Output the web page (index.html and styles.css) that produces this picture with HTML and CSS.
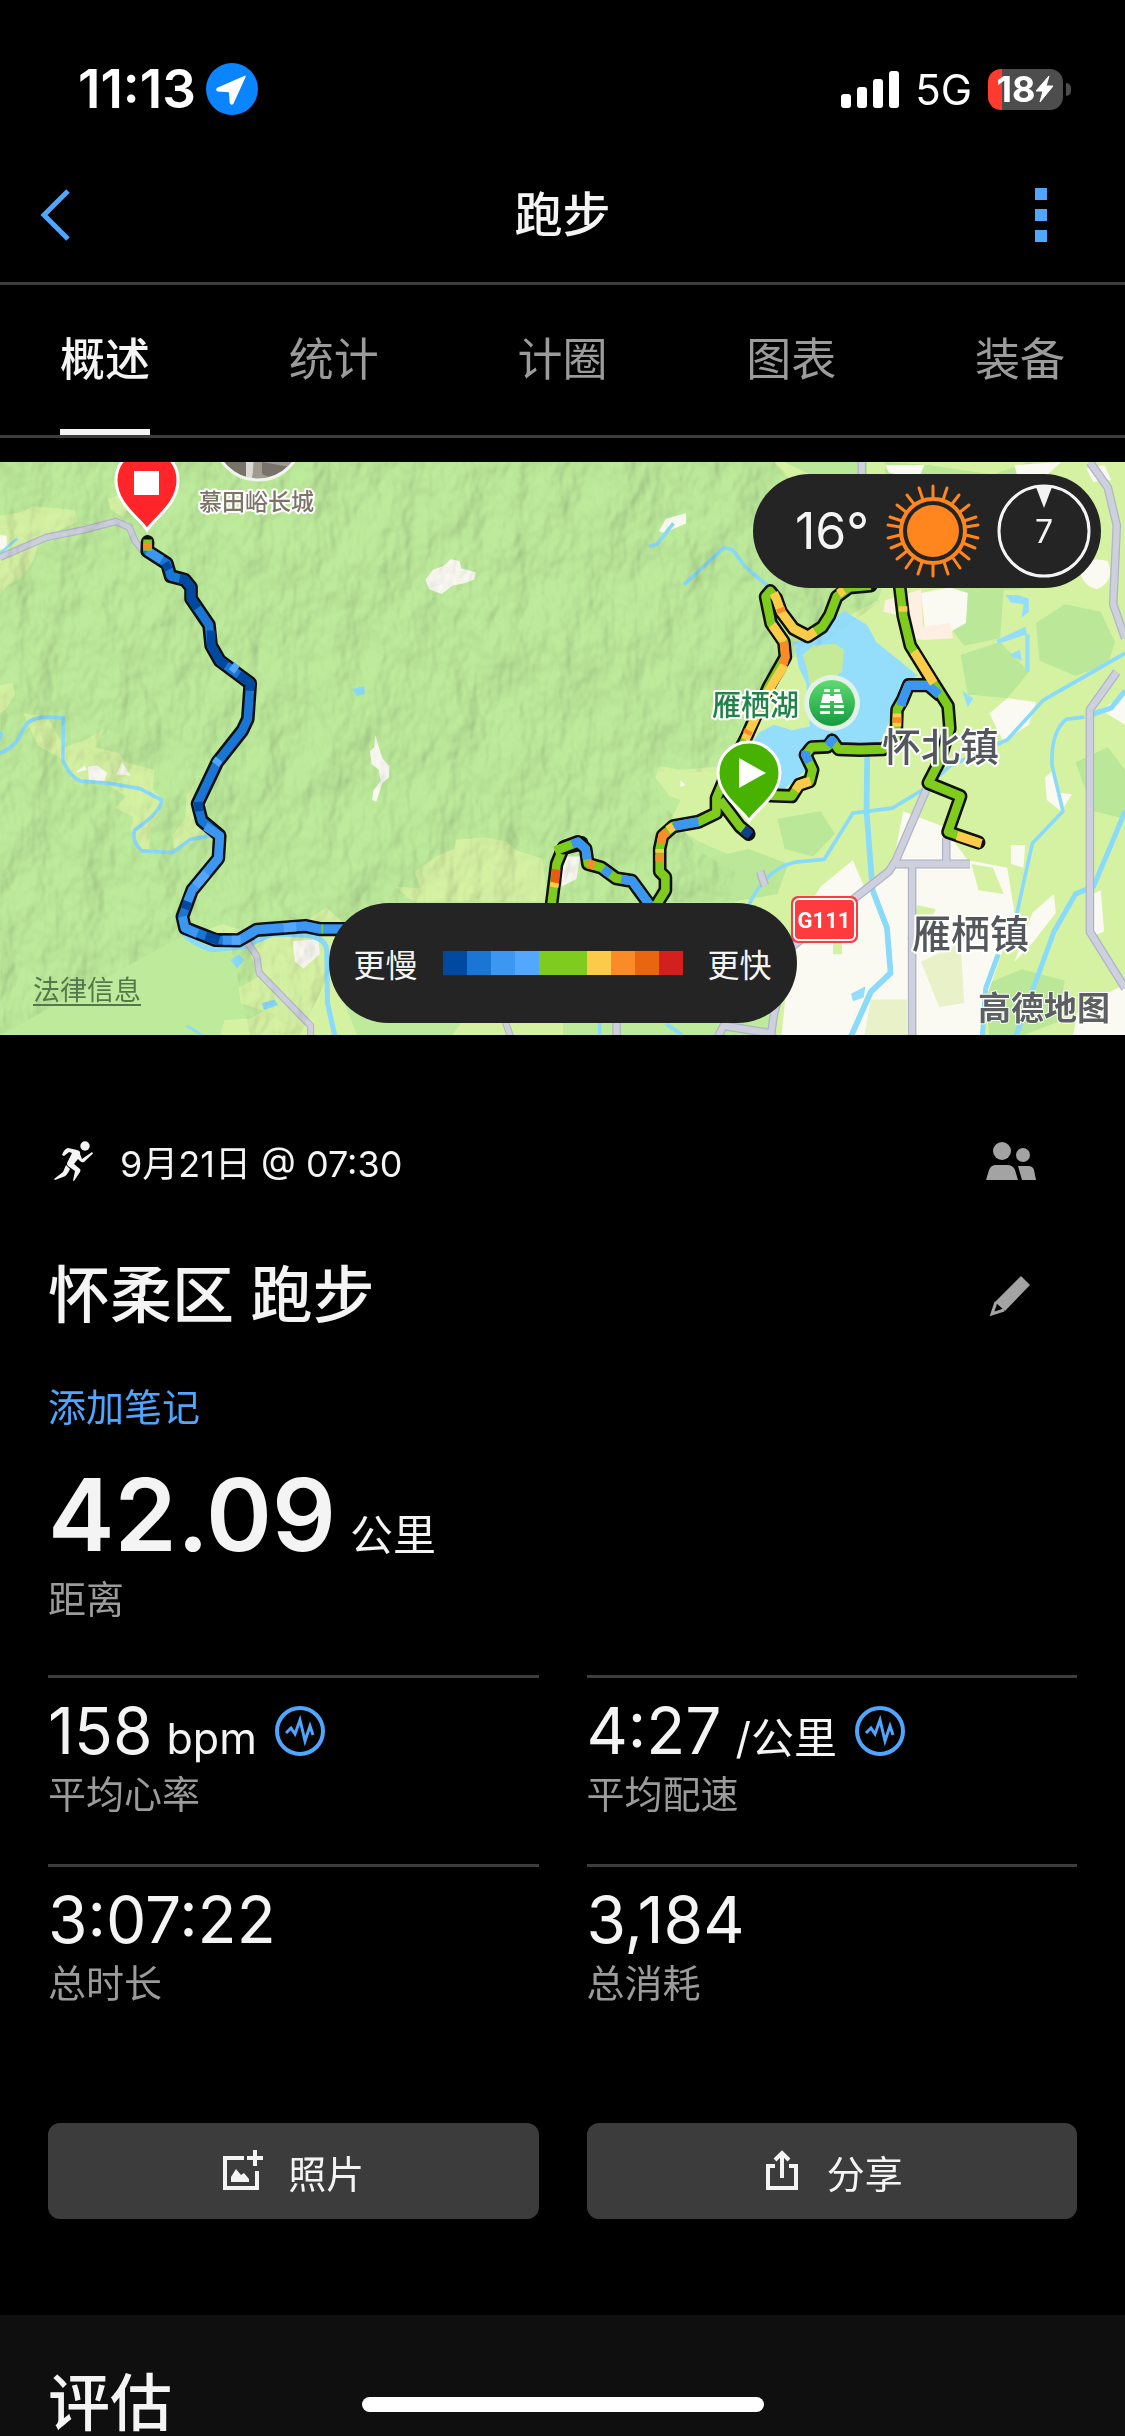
FILE: index.html
```
<!DOCTYPE html>
<html lang="zh-CN">
<head>
    <meta charset="UTF-8">
    <meta name="viewport" content="width=device-width, initial-scale=1.0">
    <title>跑步</title>
    <link rel="stylesheet" href="styles.css">
</head>
<body>
    <div class="status-bar">
        <div class="status-left">
            <span class="time">11:13</span>
            <svg class="location" width="52" height="52" viewBox="0 0 52 52">
                <circle cx="26" cy="26" r="26" fill="#0a84ff"/>
                <path d="M39 13.500L11.500 25.500Q10 27 12 27.800L23.500 28.500 24.500 40Q25.500 42 27 40Z" fill="#fff" stroke="#fff" stroke-width="1.500" stroke-linejoin="round"/>
            </svg>
        </div>
        <div class="status-right">
            <svg width="58" height="37" viewBox="0 0 58 37" fill="#fff">
                <rect x="0" y="23" width="10" height="14" rx="3"/>
                <rect x="16" y="16" width="10" height="21" rx="3"/>
                <rect x="32" y="8" width="10" height="29" rx="3"/>
                <rect x="48" y="0" width="10" height="37" rx="3"/>
            </svg>
            <span class="network">5G</span>
            <div class="battery">
                <span class="battery-level">18</span>
                <svg width="19" height="28" viewBox="0 0 19 28"><path d="M14 1L1 16H8L5 27 18 11H11Z" fill="#fff" stroke="#fff" stroke-linejoin="round"/></svg>
            </div>
        </div>
    </div>

    <header class="navbar">
        <button class="icon-button back" aria-label="返回">
            <svg width="32" height="54" viewBox="0 0 32 54"><path d="M28 3L4 27 28 51" fill="none" stroke="#4fa6ff" stroke-width="5"/></svg>
        </button>
        <h1>跑步</h1>
        <button class="icon-button more" aria-label="更多">
            <svg width="12" height="54" viewBox="0 0 12 54" fill="#4fa6ff"><path d="M0 0h12v12H0zM0 21h12v12H0zM0 42h12v12H0z"/></svg>
        </button>
    </header>

    <nav class="tabs">
        <a href="#overview" class="tab active">概述</a>
        <a href="#stats" class="tab">统计</a>
        <a href="#laps" class="tab">计圈</a>
        <a href="#charts" class="tab">图表</a>
        <a href="#gear" class="tab">装备</a>
    </nav>

    <section class="map">
        <svg class="map-canvas" viewBox="0 0 1125 573" preserveAspectRatio="xMidYMid slice">
            <defs>
                <filter id="relief" x="0" y="0" width="100%" height="100%">
                    <feTurbulence type="fractalNoise" baseFrequency="0.022 0.014" numOctaves="4" seed="7"/>
                    <feDiffuseLighting surfaceScale="14" diffuseConstant="1" lighting-color="#ffffff">
                        <feDistantLight azimuth="225" elevation="60"/>
                    </feDiffuseLighting>
                    <feComposite in2="SourceGraphic" operator="in"/>
                </filter>
                <linearGradient id="poi" x1="0" y1="0" x2="0" y2="1">
                    <stop offset="0" stop-color="#5fdb70"/>
                    <stop offset="1" stop-color="#139b40"/>
                </linearGradient>
                <clipPath id="photo"><circle cx="258" cy="-26" r="43"/></clipPath>
            </defs>

            <rect width="1125" height="573" fill="#bdea9b"/>

            <!-- 西侧底图 -->
            <g transform="matrix(0.3591 0 0 0.3763 0 -12)">
                <g fill="#d5f2a3">
                    <path d="M0 175L60 165 90 150 160 155 210 160 215 190 160 215 110 240 95 290 60 340 20 360 0 385Z"/>
                    <path d="M300 130L330 120 360 150 345 180 310 160ZM0 625L35 620 42 650 15 690 0 700Z"/>
                    <path d="M65 700L105 705 135 715 180 790 240 770 290 740 265 790 330 805 350 830 430 850 425 900 455 930 420 1010 415 1060 390 1060 365 1010 370 975 320 950 350 920 300 890 200 875 170 820 105 785Z"/>
                    <path d="M540 890L520 920 515 980 480 1025 485 1060 540 1040 570 1020 560 985 535 960Z"/>
                    <path d="M1100 1160L1170 1165 1155 1120 1225 1075 1265 1060 1270 1035 1350 1030 1410 1040 1440 1065 1510 1085 1525 1200 1150 1200Z"/>
                    <path d="M530 1290L620 1260 690 1280 790 1290 910 1215 960 1260 930 1400 1000 1568 610 1568 625 1515 700 1510 735 1490 670 1470 665 1430 720 1400 690 1320 590 1320Z"/>
                    <path d="M1300 1500L1568 1500V1568H1250Z"/>
                </g>
                <g fill="#fafaf2">
                    <path d="M1185 345L1205 318 1235 308 1255 290 1280 295 1285 315 1325 325 1320 345 1290 355 1260 360 1230 383 1195 370Z"/>
                    <path d="M1045 757L1055 790 1065 820 1085 840 1083 870 1065 885 1048 935 1036 930 1040 905 1060 880 1055 850 1035 835 1030 800 1042 790Z"/>
                    <path d="M215 853L235 838 242 850 215 858ZM245 842L270 838 298 858 290 880 248 880ZM325 862L340 828 362 865ZM0 225L18 228 20 260 0 265ZM815 1305L887 1300 890 1340 845 1378 822 1360Z"/>
                </g>
                <g fill="none" stroke="#8adafa" stroke-width="10" stroke-linejoin="round">
                    <path d="M0 805Q45 790 60 750T130 710L177 712 175 825Q195 870 225 880L300 885 390 900 450 930Q450 960 375 1010 365 1040 395 1065L480 1070 530 1035 590 1025"/>
                    <path d="M498 1250Q500 1300 590 1328L680 1320 760 1285 860 1290Q915 1300 910 1340L912 1470 935 1568" stroke-width="14"/>
                    <path d="M0 275L30 250 48 235M520 1530L570 1560" stroke-width="7"/>
                </g>
                <path d="M980 635L1015 628 1015 648 995 655ZM642 1355L665 1340 680 1355 660 1378ZM728 1470L765 1460 775 1475 735 1488ZM0 745L10 755 0 775Z" fill="#8adafa"/>
                <g fill="none" stroke-linejoin="round">
                    <path d="M0 285L130 232 235 212 322 190 360 205 375 240 400 270M690 1310L715 1345 722 1390 865 1530V1568M1400 1500L1425 1568" stroke="#b2b6c9" stroke-width="20"/>
                    <path d="M0 285L130 232 235 212 322 190 360 205 375 240 400 270M690 1310L715 1345 722 1390 865 1530V1568M1400 1500L1425 1568" stroke="#ced0dc" stroke-width="14"/>
                </g>
            </g>

            <!-- 东侧底图 -->
            <g transform="matrix(0.3591 0 0 0.3763 562 -12)">
                <path d="M590 32L650 100 860 300 890 370 880 400 800 440 720 500 660 520 620 600 560 660 500 740 460 840 330 850 270 840 260 870 300 920 330 930 300 990 380 1040 500 1090 480 1200 560 1300 600 1568H1568V32Z" fill="#d5f2a3"/>
                <g fill="#bae798">
                    <path d="M620 32L850 32 850 70 700 70ZM900 32L1020 40 1200 65 1300 32 1440 100 1490 200 1430 310 1280 370 1150 375 1130 440 1060 365 900 340Z"/>
                    <path d="M1320 460L1400 410 1500 430 1540 510 1520 570 1430 600 1330 560ZM1110 545L1220 510 1300 590 1240 660 1130 650ZM380 1090L520 1060 630 1100 600 1180 480 1200 380 1170Z"/>
                    <path d="M1180 1420L1280 1380 1400 1410 1380 1520 1250 1568 1190 1568ZM1100 380L1230 370 1220 500 1120 520 1080 470ZM600 980L720 960 760 1020 700 1080 620 1060Z"/>
                    <path d="M1430 830L1520 790 1568 850V980L1480 960Z"/>
                </g>
                <g fill="#fbfaf2">
                    <path d="M950 960L1060 1000 1130 1090 1240 1110 1260 1230 1220 1350 1180 1460 1170 1568H610L640 1290 720 1160 810 1090 850 1180 920 1110Z"/>
                    <path d="M270 215L290 182 345 168 345 195 305 212 280 220ZM1000 380L1080 365 1130 380 1125 460 1060 495 1010 470ZM1440 320Q1460 280 1520 295 1540 350 1490 370 1455 365 1440 320ZM1190 700L1240 660 1320 670 1300 730 1230 775Z"/>
                    <path d="M1345 870L1370 850 1380 910 1420 915 1390 960 1350 930ZM1310 1230L1370 1180 1375 1230 1310 1310 1260 1360ZM1500 690L1568 650V730ZM1460 1190L1500 1170 1510 1280 1480 1290ZM1260 40L1390 32 1330 85 1270 80ZM900 40H1010L990 80 910 60ZM0 1080L50 1080 40 1140 0 1160Z"/>
                    <path d="M1440 1480L1568 1420V1568H1420ZM1460 50L1510 40 1530 80 1480 85ZM330 878L345 890 330 895ZM1250 1050L1290 1050 1285 1110 1250 1100Z"/>
                </g>
                <path d="M900 400L1000 370 1005 470 1080 460 1090 500 1010 505 960 500 940 440 895 430Z" fill="#fdefe2"/>
                <path d="M1000 1360L1110 1310 1120 1470 1050 1480ZM860 1460L960 1460 960 1568 840 1568Z" fill="#e8f1c8"/>
                <path d="M755 1310H780V1340H755ZM990 1210L1040 1220 1010 1300 960 1300ZM1140 1100L1200 1110 1230 1180 1160 1170Z" fill="#d5f2a3"/>
                <g fill="#94defc">
                    <path d="M785 428L850 465 875 510 940 560 990 600 940 630 925 690 890 770 850 810 740 780 690 800 680 850 620 900 580 900 520 790 550 750 590 730 640 745 690 735 680 620 660 580 645 510 690 500 740 460Z"/>
                    <path d="M1235 385L1270 385 1300 395 1300 430 1280 445 1285 410 1250 405ZM1210 505L1290 470 1295 490 1215 515ZM1245 545L1275 530 1280 560ZM1290 490H1302V590H1290ZM1115 640L1145 660 1130 685ZM805 1445L845 1425 840 1455 810 1465Z"/>
                </g>
                <path d="M670 545L700 520 760 515 785 530 780 590 740 610 710 650 690 640 685 590Z" fill="#c5eb98"/>
                <g fill="none" stroke="#8adafa" stroke-width="10" stroke-linejoin="round">
                    <path d="M340 358L450 260 475 265 510 310 590 375M242 257L265 250 310 195"/>
                    <path d="M850 810L848 960 865 1170 905 1270 915 1390 860 1440 800 1568" stroke-width="16"/>
                    <path d="M520 1210Q570 1110 650 1095L730 1088 810 965 920 952 1010 900 1080 840 1240 770 1340 665 1568 540"/>
                    <path d="M1455 710L1405 715Q1360 750 1365 840L1395 960 1310 1045 1290 1130 1265 1240"/>
                    <path d="M1470 705L1530 685 1568 640M1568 960L1520 1070 1480 1160 1430 1180 1370 1280 1260 1568M1215 1340L1180 1430 1170 1568" stroke-width="14"/>
                    <path d="M290 1525L335 1555M105 1523V1568"/>
                </g>
                <g fill="none" stroke-linejoin="round">
                    <path d="M1020 890L930 1090 910 1120 810 1195 640 1320 590 1500 580 1568M930 1100H1136M975 1100V1568M1070 1030V1100M835 32V70M1470 32L1520 100 1545 200 1535 410 1568 500M1545 590L1470 690V1280L1568 1430M430 1568L450 1530 580 1550M152 1523V1568M552 1120L565 1158" stroke="#b0b4c7" stroke-width="24"/>
                    <path d="M1020 890L930 1090 910 1120 810 1195 640 1320 590 1500 580 1568M930 1100H1136M975 1100V1568M1070 1030V1100M835 32V70M1470 32L1520 100 1545 200 1535 410 1568 500M1545 590L1470 690V1280L1568 1430M430 1568L450 1530 580 1550M152 1523V1568M552 1120L565 1158" stroke="#ced0dd" stroke-width="17"/>
                </g>
            </g>

            <!-- 山地阴影 -->
            <path class="relief" filter="url(#relief)" d="M0 0H775L870 100 880 140 810 190 780 200 750 280 720 310 655 310 660 340 670 350 700 390 735 410 730 440H420L330 510 300 573H250L230 480 190 470 0 573Z"/>

            <!-- 景点头像 -->
            <g clip-path="url(#photo)">
                <rect x="210" y="-10" width="96" height="35" fill="#a09b90"/>
                <path d="M210 0L248 -5 254 20 210 20ZM262 0L290 5 280 20 262 12Z" fill="#77736a"/>
                <path d="M246 0L254 -5 252 20 246 16Z" fill="#dcd9d2"/>
            </g>
            <circle cx="258" cy="-26" r="44" fill="none" stroke="#f4f4ef" stroke-width="3"/>

            <!-- 轨迹：西段 -->
            <g class="route" transform="matrix(0.3591 0 0 0.3763 0 -12)">
                <path class="route-edge" d="M411 245L410 268 465 302 475 335 515 345 532 365 532 395 582 465 588 520 612 560 697 620 690 715 675 745 605 830 550 940 562 985 612 1025 608 1085 535 1170 508 1240 515 1270 600 1302 665 1303 715 1275 850 1265 890 1273 1000 1273"/>
                <path stroke="#1976d4" d="M411 245L410 268 465 302 475 335 515 345 532 365 532 395 582 465 588 520 612 560 697 620 690 715 675 745 605 830 550 940 562 985 612 1025 608 1085 535 1170 508 1240 515 1270 600 1302 665 1303 715 1275 850 1265 890 1273 1000 1273"/>
                <path stroke="#3c97f2" d="M410 268L450 292M572 1000L612 1025 608 1085 535 1170 522 1200M508 1240L515 1270 550 1285M620 1303L665 1303 715 1275 850 1265 890 1273 1000 1273"/>
                <path stroke="#0049a0" d="M460 300L470 318M500 342L515 345 532 365 532 395 550 420M588 480L588 520 612 560 630 573M665 598L697 620 696 640M552 935L554 960M522 1200L515 1220M573 1292L610 1303"/>
                <path stroke="#54a7ff" d="M575 1125L545 1158M645 573L660 585M600 835L610 822M645 1303H670M790 1270L825 1267"/>
                <path stroke="#80cc1e" d="M411 238V268M895 1273H900"/>
                <path stroke="#fb8b26" d="M411 248V262"/>
                <path class="route-edge" d="M1620 1045L1568 1058 1550 1100 1533 1230"/>
                <path stroke="#80cc1e" d="M1620 1045L1568 1058 1550 1100 1533 1230"/>
                <path stroke="#ea5a10" d="M1549 1115L1545 1150"/>
                <path stroke="#fccb4a" d="M1545 1150L1543 1162"/>
            </g>

            <!-- 轨迹：东段 -->
            <g class="route" transform="matrix(0.3591 0 0 0.3763 562 -12)">
                <path class="route-edge" d="M5 1056L45 1042 66 1060 72 1100 110 1110 150 1138 195 1145 245 1210M262 1210L288 1170V1135L272 1120V1060L280 1025 310 1000 380 988 430 965V925L450 880 510 770 575 630 622 550 618 510 582 460 567 390 580 375 597 395 610 430 645 475 685 495 725 470 745 440 765 390 800 365 860 360M440 930L495 1000 520 1020"/>
                <path class="route-edge" d="M940 360L950 440 970 520 1035 620 1075 680 1080 740 1050 830 1020 885 1110 920 1075 1015 1160 1043M1050 650L1020 625H965L948 665 933 690 930 770 895 795 830 797 770 795 752 772 740 788 695 790 678 810 698 850 690 880 660 890 640 920 580 918"/>
                <path stroke="#80cc1e" d="M-20 1065L0 1058 45 1042 66 1060 72 1100 110 1110 150 1138 195 1145 245 1210M262 1210L288 1170V1135L272 1120V1060L280 1025 310 1000 380 988 430 965V925L450 880 510 770 575 630 622 550 618 510 582 460 567 390 580 375 597 395 610 430 645 475 685 495 725 470 745 440 765 390 800 365 860 360M440 930L495 1000 520 1020"/>
                <path stroke="#80cc1e" d="M940 360L950 440 970 520 1035 620 1075 680 1080 740 1050 830 1020 885 1110 920 1075 1015 1160 1043M1050 650L1020 625H965L948 665 933 690 930 770 895 795 830 797 770 795 752 772 740 788 695 790 678 810 698 850 690 880 660 890 640 920 580 918"/>
                <path stroke="#3c97f2" d="M28 1048L45 1042 66 1060 70 1088M115 1113L135 1128M165 1141L195 1145 245 1210M310 1000L380 988M1050 650L1020 625H965L948 665 945 680M679 800L678 810 688 830M740 786L752 772 760 780"/>
                <path stroke="#0d3f8f" d="M505 1008L525 1024"/>
                <path stroke="#fccb4a" d="M585 465L618 510M620 570L575 640 510 770M590 380L597 395 610 430 645 475 685 495 705 482M770 382L785 372M950 415V430M980 535L1035 620M933 700V735M692 880L660 890 650 905M295 1010L310 1000M272 1060V1070M1100 1025L1168 1046"/>
                <path stroke="#fb8b26" d="M618 510L622 550 616 570M72 1100L90 1104M276 1045L280 1025 292 1015M272 1075V1092M933 710V725M515 755L520 745M608 420L612 432"/>
            </g>

            <!-- 地点标注 -->
            <g class="map-label">
                <text x="199" y="48" font-size="23" fill="#7c7467">慕田峪长城</text>
                <text x="712" y="254" font-size="29" fill="#23824a">雁栖湖</text>
                <text x="882" y="299" font-size="39" fill="#54585c">怀北镇</text>
                <text x="912" y="486" font-size="39" fill="#54585c">雁栖镇</text>
                <text class="map-brand" x="978" y="558" font-size="33" fill="#5c6060">高德地图</text>
            </g>
            <circle cx="832" cy="241" r="28" fill="#e4f1e6"/>
            <circle cx="832" cy="241" r="23" fill="url(#poi)"/>
            <path d="M824 227h6v3h-6zM834 227h6v3h-6zM823 232h7v9h-9zM834 232h7l2 9h-9zM820 243h10v3h-10zM834 243h10v3h-10zM820 249h10v3h-10zM834 249h10v3h-10zM830 234h4v5h-4z" fill="#fff"/>
            <rect x="791" y="434" width="67" height="47" rx="7" fill="#ff3b3e"/>
            <rect x="794" y="437" width="61" height="41" rx="5" fill="none" stroke="#fff" stroke-width="2"/>
            <text class="road-sign" x="824" y="466" font-size="22">G111</text>

            <!-- 终点、起点 -->
            <path d="M147 68C141 57 116 43 116 18A31 31 0 0 1 178 18C178 43 153 57 147 68Z" fill="#ff2529" stroke="#fff" stroke-width="3"/>
            <path d="M134 9h25v24h-25z" fill="#fff"/>
            <path d="M749 359C743 348 718 334 718 311A31 31 0 0 1 780 311C780 334 755 348 749 359Z" fill="#47b300" stroke="#fff" stroke-width="3"/>
            <path d="M739 296L766 311 739 326Z" fill="#fff"/>
        </svg>

        <div class="weather">
            <span class="temperature">16°</span>
            <svg width="94" height="94" viewBox="-47 -47 94 94">
                <circle r="26" fill="#ff861f"/>
                <circle r="32" fill="none" stroke="#ff861f" stroke-width="4"/>
                <path fill="none" stroke="#ff861f" stroke-width="3" stroke-linecap="round" d="M0-33V-45M10-31L14-43M19-27L26-36M27-19L36-26M31-10L43-14M33-4L45-6M33 4L45 7M30 12L42 17M26 20L36 28M20 27L27 37M11 31L15 43M0 33V45M-10-31L-14-43M-19-27L-26-36M-27-19L-36-26M-31-10L-43-14M-33-4L-45-6M-33 4L-45 7M-30 12L-42 17M-26 20L-36 28M-20 27L-27 37M-11 31L-15 43"/>
            </svg>
            <div class="wind">
                <svg class="wind-dial" width="94" height="94" viewBox="-47 -47 94 94">
                    <circle r="45" fill="none" stroke="#f4f4f4" stroke-width="3"/>
                    <path d="M-8-44L0-23 8-44Z" fill="#f4f4f4"/>
                </svg>
                <span>7</span>
            </div>
        </div>

        <div class="legend">
            <span>更慢</span>
            <div class="legend-scale">
                <i class="speed-1"></i><i class="speed-2"></i><i class="speed-3"></i><i class="speed-4"></i><i class="speed-5"></i><i class="speed-5"></i><i class="speed-6"></i><i class="speed-7"></i><i class="speed-8"></i><i class="speed-9"></i>
            </div>
            <span>更快</span>
        </div>

        <a href="#legal" class="legal">法律信息</a>
    </section>

    <main class="summary" id="overview">
        <div class="row">
            <div class="date">
                <svg width="40" height="42" viewBox="0 0 40 42" fill="#f4f4f4">
                    <circle cx="31" cy="6" r="4.700"/>
                    <path d="M14 8L23 10Q27 11 26 14L28 19 38 12 39 13.500 30 22Q28 23 26 21L24 19 20 24 26 29Q27 30 26 32L20 41 19 40.500 21 31 14 26Q12 24 14 21L18 13 15 12 10 16 8 15Q10 9 14 8Z"/>
                    <path d="M12 25L16 29Q13 36 9 37L1 40 0 39 9 32Z"/>
                </svg>
                <span>9月21日 @ 07:30</span>
            </div>
            <button class="icon-button" aria-label="隐私设置">
                <svg width="52" height="40" viewBox="0 0 52 40" fill="#a3a3a3">
                    <circle cx="17" cy="10" r="9"/>
                    <circle cx="38" cy="14" r="7"/>
                    <path d="M1 39L4 29Q6 24 11 24H22Q28 24 30 29L33 39ZM33 25H43Q48 25 49 29L51 39H37Z"/>
                </svg>
            </button>
        </div>

        <div class="row title-row">
            <h2>怀柔区 跑步</h2>
            <button class="icon-button" aria-label="编辑">
                <svg width="52" height="42" viewBox="0 0 52 42">
                    <path d="M36 1L45 10 20 36 10 27Z" fill="#a3a3a3"/>
                    <path d="M11 27L7 39 19 35" fill="none" stroke="#a3a3a3" stroke-width="3"/>
                </svg>
            </button>
        </div>

        <a href="#notes" class="add-note">添加笔记</a>

        <div class="distance">
            <div class="value"><strong>42.09</strong><span class="unit">公里</span></div>
            <div class="label">距离</div>
        </div>

        <div class="stats">
            <div class="stat">
                <div class="value">158<span class="unit">bpm</span>
                    <svg class="pulse" width="50" height="50" viewBox="0 0 50 50" fill="none" stroke="#4fa6ff"><circle cx="25" cy="25" r="23" stroke-width="4"/><path d="M11 27L16 22 20 28 25 14 30 35 35 20 38 29" stroke-width="3"/></svg>
                </div>
                <div class="label">平均心率</div>
            </div>
            <div class="stat">
                <div class="value">4:27<span class="unit">/公里</span>
                    <svg class="pulse" width="50" height="50" viewBox="0 0 50 50" fill="none" stroke="#4fa6ff"><circle cx="25" cy="25" r="23" stroke-width="4"/><path d="M11 27L16 22 20 28 25 14 30 35 35 20 38 29" stroke-width="3"/></svg>
                </div>
                <div class="label">平均配速</div>
            </div>
            <div class="stat">
                <div class="value">3:07:22</div>
                <div class="label">总时长</div>
            </div>
            <div class="stat">
                <div class="value">3,184</div>
                <div class="label">总消耗</div>
            </div>
        </div>

        <div class="actions">
            <button class="action">
                <svg width="42" height="42" viewBox="0 0 42 42">
                    <path d="M22 8H3V38H35V21" fill="none" stroke="#f4f4f4" stroke-width="4"/>
                    <path d="M33 0V16M25 8H41" stroke="#f4f4f4" stroke-width="4"/>
                    <path d="M9 32V27L14 19 19 25 22 23 27 29V32Z" fill="#f4f4f4"/>
                </svg>
                照片
            </button>
            <button class="action">
                <svg width="42" height="42" viewBox="0 0 42 42">
                    <path d="M14 16H7V38H35V16H28" fill="none" stroke="#f4f4f4" stroke-width="4"/>
                    <path d="M21 28V4M14 10L21 3 28 10" fill="none" stroke="#f4f4f4" stroke-width="4"/>
                </svg>
                分享
            </button>
        </div>
    </main>

    <section class="evaluation">
        <h2>评估</h2>
    </section>

    <div class="home-indicator"></div>
</body>
</html>
```
FILE: styles.css
```
* {
    box-sizing: border-box;
}
body {
    margin: 0;
    height: 100vh;
    overflow: hidden;
    display: flex;
    flex-direction: column;
    background-color: #000;
    color: #f4f4f4;
    font-family: Inter, "Noto Sans CJK SC", sans-serif;
}
h1, h2 {
    margin: 0;
    font-weight: 500;
}
a {
    text-decoration: none;
}
button {
    border: 0;
    padding: 0;
    background: none;
    color: inherit;
    font-family: inherit;
}
svg {
    display: block;
    flex-shrink: 0;
}
.icon-button {
    display: flex;
}

/* 状态栏 */
.status-bar {
    display: flex;
    justify-content: space-between;
    align-items: center;
    height: 178px;
    padding: 0 62px 0 78px;
    color: #fff;
    flex-shrink: 0;
}
.status-left, .status-right {
    display: flex;
    align-items: center;
}
.status-left {
    gap: 10px;
}
.time {
    font-size: 53px;
    font-weight: 600;
}
.status-right {
    gap: 16px;
}
.network {
    font-size: 42px;
}
.battery {
    position: relative;
    display: flex;
    align-items: center;
    justify-content: center;
    width: 75px;
    height: 41px;
    border-radius: 13px;
    background: linear-gradient(to right, #ff3b30 14px, #4d4d4d 14px);
}
.battery::after {
    content: "";
    position: absolute;
    left: 78px;
    top: 14px;
    width: 5px;
    height: 13px;
    border-radius: 0 6px 6px 0;
    background-color: #4d4d4d;
}
.battery-level {
    font-size: 36px;
    font-weight: 700;
}

/* 导航 */
.navbar {
    display: flex;
    align-items: center;
    justify-content: space-between;
    height: 107px;
    padding: 0 40px 30px;
    border-bottom: 3px solid #3c3c3c;
    flex-shrink: 0;
}
.navbar h1 {
    font-size: 48px;
    line-height: 72px;
}
.back, .more {
    width: 88px;
}
.more {
    justify-content: center;
}
.tabs {
    display: flex;
    justify-content: space-between;
    height: 153px;
    padding: 0 60px;
    border-bottom: 3px solid #3c3c3c;
    flex-shrink: 0;
}
.tab {
    height: 150px;
    border-bottom: 6px solid transparent;
    color: #9b9b9b;
    font-size: 45px;
    line-height: 150px;
}
.tab.active {
    color: #f4f4f4;
    border-bottom-color: #f4f4f4;
    font-weight: 500;
}

/* 地图 */
.map {
    position: relative;
    height: 573px;
    margin-top: 24px;
    overflow: hidden;
    flex-shrink: 0;
}
.map-canvas {
    width: 100%;
    height: 100%;
}
.relief {
    opacity: 0.3;
    mix-blend-mode: multiply;
}
.route {
    fill: none;
    stroke-width: 24;
    stroke-linejoin: round;
}
.route-edge {
    stroke: #111;
    stroke-width: 38;
    stroke-linecap: round;
}
.map-label {
    font-weight: 500;
    paint-order: stroke;
    stroke: #fff;
    stroke-width: 4px;
    stroke-linejoin: round;
}
.map-brand {
    font-weight: 700;
    stroke-width: 2px;
}
.road-sign {
    fill: #fff;
    font-family: Roboto, sans-serif;
    font-weight: 700;
    text-anchor: middle;
}
.weather {
    position: absolute;
    top: 12px;
    right: 24px;
    display: flex;
    align-items: center;
    gap: 17px;
    height: 114px;
    padding: 0 10px 0 42px;
    border-radius: 57px;
    background-color: #242424;
}
.temperature {
    font-size: 50px;
}
.wind {
    position: relative;
    display: flex;
    align-items: center;
    justify-content: center;
    width: 94px;
    height: 94px;
    font-size: 32px;
}
.wind-dial {
    position: absolute;
    inset: 0;
}
.legend {
    position: absolute;
    bottom: 12px;
    left: 50%;
    transform: translateX(-50%);
    display: flex;
    align-items: center;
    justify-content: center;
    gap: 25px;
    width: 468px;
    height: 120px;
    border-radius: 60px;
    background-color: #242424;
    font-size: 32px;
}
.legend-scale {
    display: flex;
}
.legend-scale i {
    width: 24px;
    height: 24px;
}
.speed-1 { background-color: #0049a0; }
.speed-2 { background-color: #1976d4; }
.speed-3 { background-color: #3c97f2; }
.speed-4 { background-color: #54a7ff; }
.speed-5 { background-color: #80cc1e; }
.speed-6 { background-color: #fccb4a; }
.speed-7 { background-color: #fb8b26; }
.speed-8 { background-color: #ea660e; }
.speed-9 { background-color: #d41f1f; }
.legal {
    position: absolute;
    left: 33px;
    bottom: 24px;
    color: #55784a;
    font-size: 27px;
    line-height: 40px;
    text-decoration: underline;
    text-underline-offset: 4px;
}

/* 概要 */
.summary {
    padding: 96px 48px;
    flex-shrink: 0;
}
.row {
    display: flex;
    align-items: center;
    justify-content: space-between;
    height: 60px;
    padding-right: 40px;
}
.date {
    display: flex;
    align-items: center;
    gap: 26px;
    padding-left: 6px;
    font-size: 36px;
}
.title-row {
    height: 90px;
    margin-top: 60px;
}
.title-row h2, .evaluation h2 {
    font-size: 62px;
    line-height: 90px;
}
.add-note {
    display: block;
    margin-top: 36px;
    color: #4fa6ff;
    font-size: 38px;
    line-height: 60px;
}
.value {
    display: flex;
    align-items: baseline;
    height: 78px;
    font-size: 64px;
    line-height: 78px;
}
.unit {
    margin-left: 14px;
    font-size: 43px;
    line-height: 48px;
}
.label {
    color: #9b9b9b;
    font-size: 38px;
    line-height: 48px;
}
.distance {
    margin-top: 18px;
}
.distance .value {
    height: 120px;
    line-height: 120px;
}
.distance strong {
    font-size: 100px;
    font-weight: 600;
}
.stats {
    display: grid;
    grid-template-columns: 1fr 1fr;
    column-gap: 48px;
    margin-top: 52px;
}
.stat {
    height: 189px;
    padding-top: 14px;
    border-top: 3px solid #3c3c3c;
}
.pulse {
    align-self: center;
    margin-left: 18px;
}
.actions {
    display: grid;
    grid-template-columns: 1fr 1fr;
    gap: 48px;
    margin-top: 70px;
}
.action {
    display: flex;
    align-items: center;
    justify-content: center;
    gap: 24px;
    height: 96px;
    border-radius: 12px;
    background-color: #3c3c3c;
    font-size: 38px;
}
.evaluation {
    flex: 1 0 120px;
    padding: 44px 48px 0;
    background-color: #0f0f0f;
}
.home-indicator {
    position: fixed;
    bottom: 24px;
    left: 50%;
    width: 402px;
    height: 15px;
    margin-left: -201px;
    border-radius: 8px;
    background-color: #fff;
}
```
